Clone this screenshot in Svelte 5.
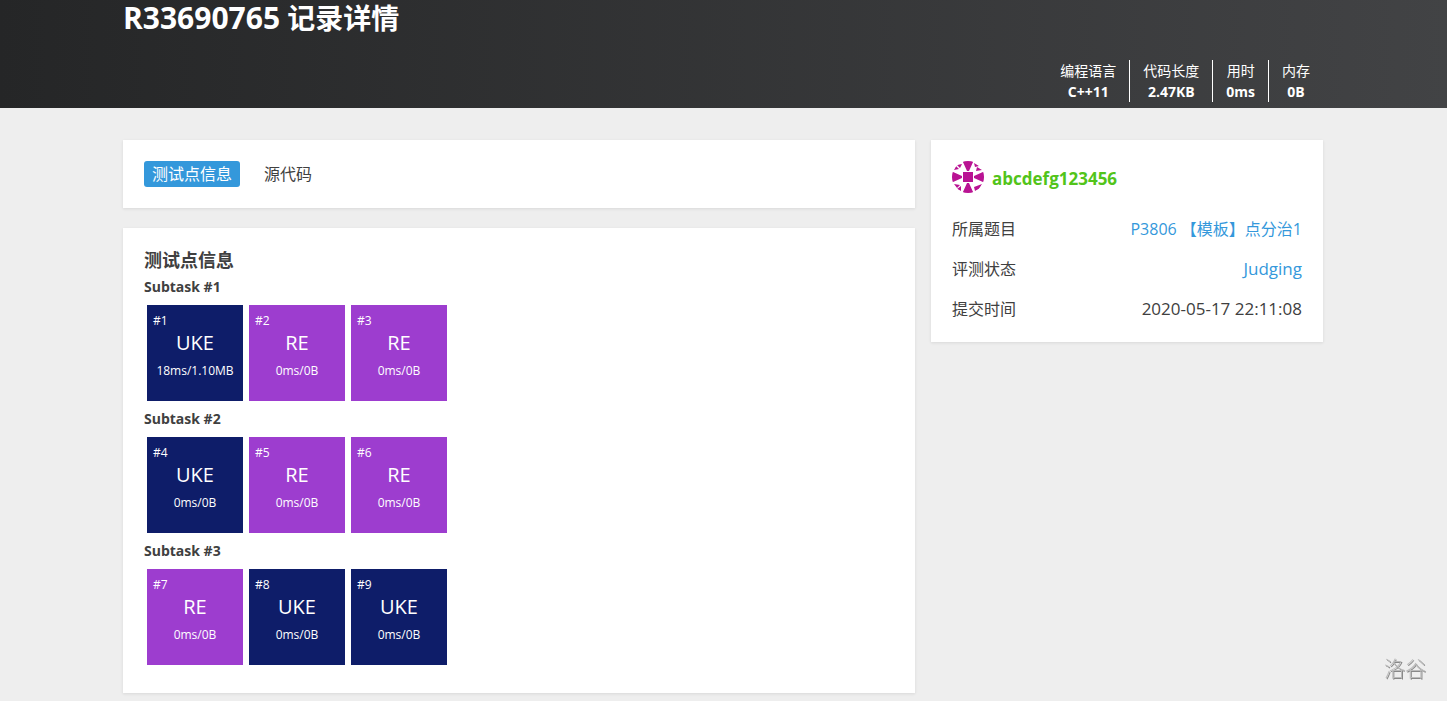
<script lang="ts">
  const stats = [
    { label: '编程语言', value: 'C++11' },
    { label: '代码长度', value: '2.47KB' },
    { label: '用时', value: '0ms' },
    { label: '内存', value: '0B' },
  ];

  const subtasks = [
    [
      { id: 1, status: 'UKE', info: '18ms/1.10MB' },
      { id: 2, status: 'RE', info: '0ms/0B' },
      { id: 3, status: 'RE', info: '0ms/0B' },
    ],
    [
      { id: 4, status: 'UKE', info: '0ms/0B' },
      { id: 5, status: 'RE', info: '0ms/0B' },
      { id: 6, status: 'RE', info: '0ms/0B' },
    ],
    [
      { id: 7, status: 'RE', info: '0ms/0B' },
      { id: 8, status: 'UKE', info: '0ms/0B' },
      { id: 9, status: 'UKE', info: '0ms/0B' },
    ],
  ];

  let tab = $state('info');
</script>

<header>
  <div class="container">
    <h1><span class="rid">R33690765</span> 记录详情</h1>
    <div class="stats">
      {#each stats as stat}
        <div class="stat">
          <span>{stat.label}</span>
          <strong>{stat.value}</strong>
        </div>
      {/each}
    </div>
  </div>
</header>

<main class="container columns">
  <div class="left">
    <nav class="card tabs">
      <button class:active={tab === 'info'} onclick={() => (tab = 'info')}>测试点信息</button>
      <button class:active={tab === 'code'} onclick={() => (tab = 'code')}>源代码</button>
    </nav>

    <section class="card">
      <h3>测试点信息</h3>
      {#each subtasks as cases, i}
        <h5>Subtask #{i + 1}</h5>
        <div class="cases">
          {#each cases as c}
            <div class="case" class:uke={c.status === 'UKE'}>
              <div class="id">#{c.id}</div>
              <div class="status">{c.status}</div>
              <div class="info">{c.info}</div>
            </div>
          {/each}
        </div>
      {/each}
    </section>
  </div>

  <aside class="card">
    <div class="user">
      <svg class="avatar" viewBox="0 0 32 32" aria-hidden="true">
        <path d="M11 11h10v10H11z" />
        <path d="M10.500 0h11l-4.500 10h-2zM10.500 32h11l-4.500-10h-2zM0 10.500v11l10-4.500v-2zM32 10.500v11l-10-4.500v-2z" />
        <path d="M5 4l5-1-2 4zM2 9l2-4 3 3zM22 2l5 3-4 1zM25 6l5 3-6 1zM2 23l6 1-3 3zM5 28l4-3v5zM22 26l8-3-3 5-4 2z" />
      </svg>
      <a href="#user">abcdefg123456</a>
    </div>
    <dl>
      <div>
        <dt>所属题目</dt>
        <dd><a href="#problem">P3806 【模板】点分治1</a></dd>
      </div>
      <div>
        <dt>评测状态</dt>
        <dd class="latin"><a href="#status">Judging</a></dd>
      </div>
      <div>
        <dt>提交时间</dt>
        <dd class="latin">2020-05-17 22:11:08</dd>
      </div>
    </dl>
  </aside>
</main>

<div class="watermark">洛谷</div>

<style>
  :global(body) {
    background: #eee;
    color: #404040;
    font: 16px/24px "Open Sans", "Noto Sans CJK SC", sans-serif;
  }

  .container {
    max-width: 1200px;
    margin: 0 auto;
    padding-right: 1px;
  }

  header {
    padding-bottom: 6px;
    background: linear-gradient(to right, #252627, #424345);
    color: #fff;
  }

  h1 {
    margin: 0 0 24px;
    font-size: 28px;
    line-height: 36px;
  }

  .rid {
    font-size: 30px;
  }

  .stats {
    display: flex;
    justify-content: flex-end;
  }

  .stat {
    display: flex;
    flex-direction: column;
    padding: 0 13px;
    font-size: 14px;
    line-height: 21px;
    text-align: center;
  }

  .stat + .stat {
    border-left: 1px solid #fff;
  }

  .columns {
    display: grid;
    grid-template-columns: minmax(0, 792fr) minmax(0, 392fr);
    align-items: start;
    gap: 16px;
    padding-top: 32px;
    padding-bottom: 7px;
  }

  .left {
    display: grid;
    gap: 20px;
  }

  .card {
    padding: 21px;
    background: #fff;
    box-shadow: 0 1px 3px rgba(26, 26, 26, 0.1);
  }

  .tabs {
    display: flex;
    gap: 16px;
  }

  .tabs button {
    padding: 0 8px;
    border: none;
    border-radius: 3px;
    background: none;
    color: inherit;
    font: inherit;
    line-height: 26px;
    cursor: pointer;
  }

  .tabs .active {
    background: #3498db;
    color: #fff;
  }

  h3 {
    margin: 0 0 4px;
    font-size: 18px;
    line-height: 23px;
  }

  h5 {
    margin: 0;
    font-size: 14px;
    line-height: 22px;
  }

  .cases {
    display: flex;
    flex-wrap: wrap;
    gap: 6px;
    padding: 7px 3px;
  }

  .case {
    box-sizing: border-box;
    width: 96px;
    height: 96px;
    padding: 7px 6px;
    background: #9d3dcf;
    color: #fff;
    font-size: 12px;
    line-height: 18px;
    text-align: center;
  }

  .case.uke {
    background: #0e1d69;
  }

  .id {
    text-align: left;
  }

  .status {
    margin-bottom: 6px;
    font-size: 20px;
    line-height: 26px;
  }

  .info {
    white-space: nowrap;
  }

  .user {
    display: flex;
    align-items: flex-end;
    gap: 8px;
    margin-bottom: 24px;
    font-size: 17px;
    font-weight: bold;
    line-height: 28px;
  }

  .avatar {
    width: 32px;
    height: 32px;
    border-radius: 50%;
    fill: #b91393;
  }

  a {
    color: #3498db;
    text-decoration: none;
  }

  .user a {
    color: #52c41a;
  }

  dl {
    display: grid;
    gap: 16px;
    margin: 0;
  }

  dl div {
    display: flex;
    justify-content: space-between;
  }

  dd {
    margin: 0;
  }

  .latin {
    font-size: 17px;
  }

  .watermark {
    position: fixed;
    right: 21px;
    bottom: 18px;
    color: #bbb;
    font-size: 21px;
    font-weight: 300;
    line-height: 30px;
    text-shadow: 1px 1px 0 #888;
  }
</style>
